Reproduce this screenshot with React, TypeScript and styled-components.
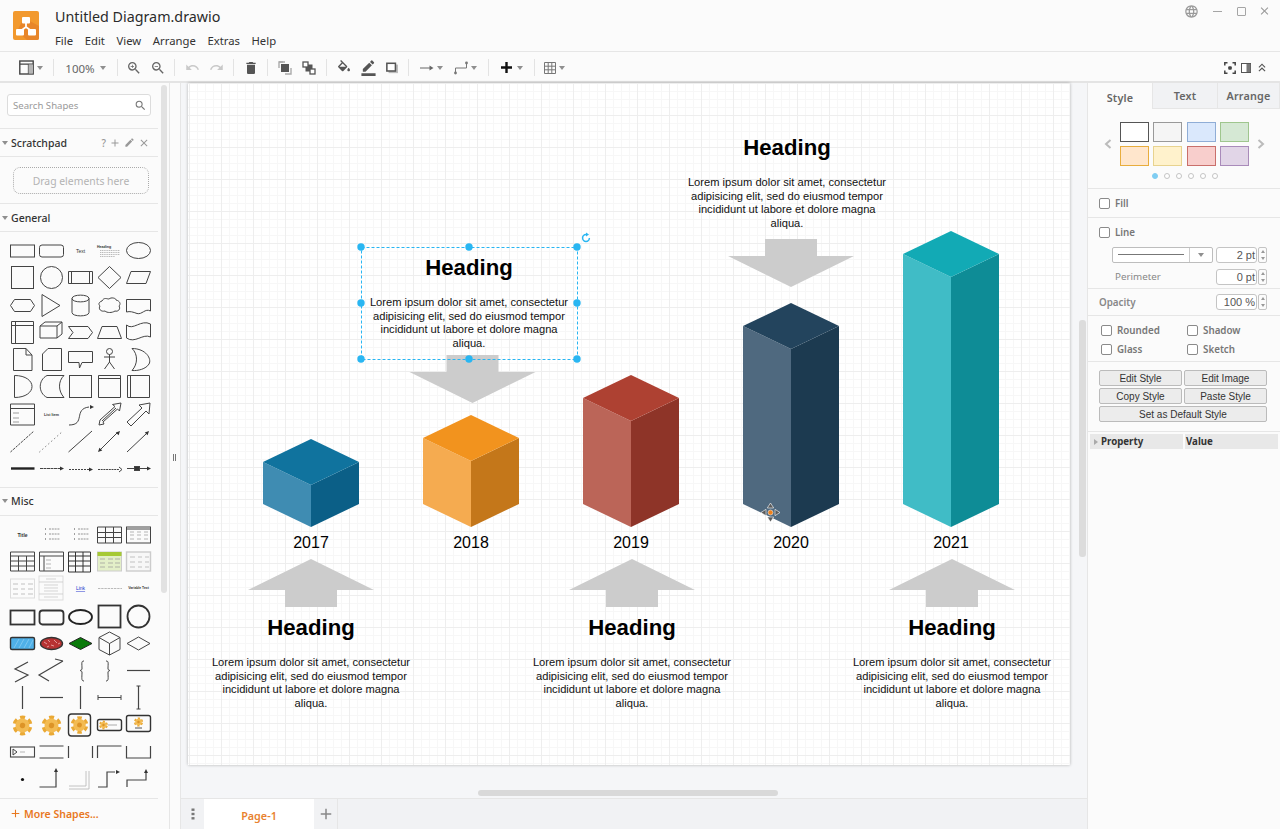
import React from "react";
import styled, { createGlobalStyle } from "styled-components";
import {
  MdAdd,
  MdBorderColor,
  MdClose,
  MdDelete,
  MdEdit,
  MdKeyboardDoubleArrowUp,
  MdLanguage,
  MdRedo,
  MdSearch,
  MdUndo,
  MdZoomIn,
  MdZoomOut,
} from "react-icons/md";

const UI_FONT = `"Noto Sans", "Open Sans", sans-serif`;
const DIAGRAM_FONT = `"Liberation Sans", Arial, sans-serif`;
const PANEL_BG = "#fbfbfb";
const BORDER = "#e6e6e6";

const GlobalStyle = createGlobalStyle`
  html, body { margin: 0; padding: 0; height: 100%; overflow: hidden; }
  body { font-family: ${UI_FONT}; background: ${PANEL_BG}; color: #333; }
  * { box-sizing: border-box; }
`;

const Root = styled.div`
  width: 1280px;
  height: 829px;
  display: flex;
  flex-direction: column;
  overflow: hidden;
`;

/* ---------- title bar ---------- */

const TitleBar = styled.header`
  height: 52px;
  flex: none;
  display: flex;
  padding: 11px 0 0 13px;
  background: ${PANEL_BG};
  border-bottom: 1px solid ${BORDER};
`;

const TitleGroup = styled.div`
  margin: -4px 0 0 16px;
  display: flex;
  flex-direction: column;
`;

const DocTitle = styled.div`
  font-size: 14.3px;
  line-height: 20px;
  color: #2b2b2b;
`;

const MenuBar = styled.nav`
  display: flex;
  gap: 11.6px;
  margin-top: 5px;
  font-size: 11.3px;
  line-height: 17px;
  color: #333;
`;

const WindowControls = styled.div`
  margin-left: auto;
  margin-top: -8px;
  padding-right: 7px;
  height: 16px;
  display: flex;
  align-items: center;
  gap: 9px;
  color: #9a9a9a;
  svg:first-child { margin-right: 2px; }
`;

const WinButton = styled.span`
  width: 15px;
  height: 15px;
  display: flex;
  align-items: center;
  justify-content: center;
`;

const MinGlyph = styled.span`
  width: 9px;
  height: 1px;
  background: #a5a5a5;
`;

const MaxGlyph = styled.span`
  width: 9px;
  height: 9px;
  border: 1px solid #a5a5a5;
  border-radius: 1px;
`;

/* ---------- toolbar ---------- */

const Toolbar = styled.div`
  height: 31px;
  flex: none;
  display: flex;
  align-items: center;
  padding: 2px 11px 0 14px;
  background: ${PANEL_BG};
  border-bottom: 2px solid #e4e4e4;
  color: #666;
`;

const ToolButton = styled.div<{ $w?: number; $faded?: boolean; $gap?: number }>`
  width: ${(p) => p.$w ?? 24}px;
  height: 24px;
  flex: none;
  display: flex;
  align-items: center;
  justify-content: center;
  gap: ${(p) => p.$gap ?? 3}px;
  font-size: 11.5px;
  color: ${(p) => (p.$faded ? "#c9c9c9" : "#666")};
`;

const ZoomLabel = styled.span`
  padding-top: 2px;
`;

const Sep = styled.span<{ $l?: number; $r?: number }>`
  width: 1px;
  height: 17px;
  flex: none;
  background: #e3e3e3;
  margin: 0 ${(p) => p.$r ?? 5}px 0 ${(p) => p.$l ?? 5}px;
`;

const Caret = styled.span`
  width: 0;
  height: 0;
  flex: none;
  border-left: 3.5px solid transparent;
  border-right: 3.5px solid transparent;
  border-top: 4px solid #8f8f8f;
`;

const ToolbarRight = styled.div`
  margin-left: auto;
  display: flex;
  align-items: center;
  gap: 2px;
`;

const SmallTool = styled.div`
  width: 14px;
  height: 16px;
  display: flex;
  align-items: center;
  justify-content: center;
  color: #555;
`;

/* ---------- main ---------- */

const Main = styled.div`
  flex: 1;
  min-height: 0;
  display: flex;
`;

const Sidebar = styled.aside`
  position: relative;
  width: 170px;
  flex: none;
  display: flex;
  flex-direction: column;
  background: ${PANEL_BG};
  border-right: 1px solid ${BORDER};
`;

const SidebarContent = styled.div`
  width: 158px;
  flex: 1;
  min-height: 0;
  display: flex;
  flex-direction: column;
`;

const SideScrollThumb = styled.div`
  position: absolute;
  left: 161px;
  top: 2px;
  width: 6px;
  height: 508px;
  border-radius: 3px;
  background: #e2e2e2;
`;

const SearchWrap = styled.div`
  height: 46px;
  flex: none;
  padding: 11px 7px 0;
  border-bottom: 1px solid ${BORDER};
`;

const SearchBox = styled.div`
  height: 22px;
  display: flex;
  align-items: center;
  justify-content: space-between;
  padding: 0 3px 0 5px;
  background: #fff;
  border: 1px solid #dcdcdc;
  border-radius: 3px;
  font-size: 9.6px;
  color: #9a9a9a;
  svg { color: #777; }
`;

const SectionHeader = styled.div`
  height: 28px;
  flex: none;
  display: flex;
  align-items: center;
  padding: 0 8px 0 2px;
  gap: 3px;
  font-size: 10.5px;
  font-weight: 500;
  color: #333;
  border-bottom: 1px solid ${BORDER};
`;

const HeaderTools = styled.div`
  margin-left: auto;
  display: flex;
  align-items: center;
  gap: 3px;
  color: #999;
  font-size: 10px;
`;

const ScratchBody = styled.div`
  height: 47px;
  flex: none;
  padding: 10px 9px 0 13px;
  border-bottom: 1px solid ${BORDER};
`;

const DropZone = styled.div`
  height: 27px;
  display: flex;
  align-items: center;
  justify-content: center;
  border: 1.5px dotted #aaa;
  border-radius: 7px;
  font-size: 10.4px;
  color: #b3b3b3;
`;

const ShapeGrid = styled.div`
  flex: none;
  display: grid;
  grid-template-columns: repeat(5, 29px);
  grid-auto-rows: 27.3px;
  padding: 5px 0 4px 8px;
  border-bottom: 1px solid ${BORDER};
`;

const ShapeSvg = styled.svg.attrs({ viewBox: "0 0 29 27" })`
  width: 29px;
  height: 27px;
  display: block;
  fill: none;
  stroke: #444;
  stroke-width: 1;
`;

const TinyText = styled.text<{ $bold?: boolean; $color?: string; $size?: number }>`
  font-family: ${DIAGRAM_FONT};
  font-size: ${(p) => p.$size ?? 5}px;
  font-weight: ${(p) => (p.$bold ? 700 : 400)};
  fill: ${(p) => p.$color ?? "#333"};
  stroke: none;
  text-anchor: middle;
`;

const MoreShapes = styled.div`
  height: 31px;
  width: 170px;
  flex: none;
  display: flex;
  align-items: center;
  gap: 2px;
  padding-left: 9px;
  font-size: 10.5px;
  font-weight: 600;
  color: #e8781f;
`;

const Splitter = styled.div`
  width: 11px;
  flex: none;
  display: flex;
  align-items: center;
  justify-content: center;
  background: #fbfbfb;
  border-right: 1px solid ${BORDER};
`;

const Grip = styled.span`
  width: 3px;
  height: 7px;
  margin-top: 3px;
  margin-right: 1px;
  border-left: 1px solid #777;
  border-right: 1px solid #777;
`;

/* ---------- canvas ---------- */

const CanvasColumn = styled.div`
  flex: 1;
  min-width: 0;
  display: flex;
  flex-direction: column;
  border-right: 1px solid ${BORDER};
`;

const CanvasArea = styled.div`
  position: relative;
  flex: 1;
  min-height: 0;
  padding: 0 0 0 7px;
  background: #f5f6f8;
`;

const Page = styled.div`
  position: relative;
  width: 882px;
  height: 682px;
  overflow: hidden;
  background-color: #fff;
  box-shadow: 0 0 3px rgba(0, 0, 0, 0.28);
  background-image:
    linear-gradient(#eeeeee 1px, transparent 1px),
    linear-gradient(90deg, #eeeeee 1px, transparent 1px),
    linear-gradient(#f7f7f7 1px, transparent 1px),
    linear-gradient(90deg, #f7f7f7 1px, transparent 1px);
  background-size: 32px 32px, 32px 32px, 8px 8px, 8px 8px;
  background-position: 1px 0;
`;

const DiagramSvg = styled.svg.attrs({ viewBox: "188 83 882 682" })`
  position: absolute;
  inset: 0;
  width: 882px;
  height: 682px;
`;

const Note = styled.div<{ $cx: number; $top: number }>`
  position: absolute;
  left: ${(p) => p.$cx - 188 - 110}px;
  top: ${(p) => p.$top - 83}px;
  width: 220px;
  text-align: center;
  font-family: ${DIAGRAM_FONT};
  color: #111;
`;

const NoteHeading = styled.div`
  font-size: 22.2px;
  font-weight: 700;
  line-height: 28px;
  color: #000;
`;

const NoteBody = styled.div`
  margin-top: 14.4px;
  font-size: 11.15px;
  line-height: 13.4px;
  white-space: pre-line;
`;

const YearLabel = styled.div<{ $cx: number }>`
  position: absolute;
  left: ${(p) => p.$cx - 188 - 30}px;
  top: ${534 - 83}px;
  width: 60px;
  text-align: center;
  font-family: ${DIAGRAM_FONT};
  font-size: 16px;
  line-height: 18px;
  color: #000;
`;

const VScroll = styled.div`
  position: absolute;
  left: 898px;
  top: 237px;
  width: 7px;
  height: 237px;
  border-radius: 3px;
  background: #dcdcdc;
`;

const HScroll = styled.div`
  position: absolute;
  left: 297px;
  top: 707px;
  width: 300px;
  height: 6px;
  border-radius: 3px;
  background: #d9d9d9;
`;

const PageBar = styled.div`
  height: 31px;
  flex: none;
  display: flex;
  align-items: stretch;
  background: #f1f2f4;
  border-top: 1px solid ${BORDER};
`;

const PageMenu = styled.div`
  width: 23px;
  display: flex;
  align-items: center;
  justify-content: center;
  color: #777;
`;

const PageTab = styled.div`
  width: 110px;
  display: flex;
  align-items: center;
  justify-content: center;
  padding-top: 2px;
  background: #fff;
  font-size: 10.8px;
  font-weight: 600;
  color: #e8822f;
`;

const AddPage = styled.div`
  width: 24px;
  display: flex;
  align-items: center;
  justify-content: center;
  color: #888;
  border-right: 1px solid ${BORDER};
`;

/* ---------- format panel ---------- */

const FormatPanel = styled.aside`
  width: 192px;
  flex: none;
  display: flex;
  flex-direction: column;
  background: ${PANEL_BG};
  font-size: 9.8px;
  color: #777;
`;

const Tabs = styled.div`
  height: 26px;
  flex: none;
  display: flex;
`;

const Tab = styled.div<{ $active?: boolean; $w: number }>`
  width: ${(p) => p.$w}px;
  display: flex;
  align-items: center;
  justify-content: center;
  font-size: 10.8px;
  font-weight: 600;
  letter-spacing: 0.2px;
  color: #666;
  padding-top: ${(p) => (p.$active ? 2 : 0)}px;
  background: ${(p) => (p.$active ? PANEL_BG : "#f1f2f4")};
  border-right: 1px solid ${BORDER};
  border-bottom: ${(p) => (p.$active ? "none" : `1px solid ${BORDER}`)};
`;

const Section = styled.div<{ $h: number }>`
  height: ${(p) => p.$h}px;
  flex: none;
  border-bottom: 1px solid ${BORDER};
`;

const SwatchRow = styled.div`
  display: flex;
  align-items: center;
  justify-content: center;
  gap: 8px;
  padding: 13px 0 0 1px;
  color: #bbb;
`;

const SwatchGrid = styled.div`
  display: grid;
  grid-template-columns: repeat(4, 29px);
  grid-auto-rows: 20px;
  column-gap: 4.6px;
  row-gap: 4px;
`;

const Swatch = styled.div<{ $fill: string; $line: string }>`
  background: ${(p) => p.$fill};
  border: 1px solid ${(p) => p.$line};
`;

const Dots = styled.div`
  display: flex;
  justify-content: center;
  gap: 6px;
  margin-top: 7px;
  padding-left: 1px;
`;

const Dot = styled.span<{ $on?: boolean }>`
  width: 6px;
  height: 6px;
  border-radius: 50%;
  background: ${(p) => (p.$on ? "#7fcdf2" : "#fff")};
  border: 1px solid ${(p) => (p.$on ? "#7fcdf2" : "#c4c4c4")};
`;

const CheckRow = styled.div<{ $left?: number; $h?: number }>`
  height: ${(p) => p.$h ?? 28}px;
  display: flex;
  align-items: center;
  gap: 5px;
  padding-left: ${(p) => p.$left ?? 11}px;
  font-weight: 600;
  color: #777;
`;

const Box = styled.span`
  width: 11px;
  height: 11px;
  flex: none;
  background: #fff;
  border: 1px solid #8a8a8a;
  border-radius: 2px;
`;

const FieldRow = styled.div<{ $h: number; $left: number; $mt?: number }>`
  height: ${(p) => p.$h}px;
  margin-top: ${(p) => p.$mt ?? 0}px;
  display: flex;
  align-items: center;
  padding-left: ${(p) => p.$left}px;
  color: #888;
`;

const OpacityLabel = styled.span`
  font-weight: 600;
  padding-top: 2px;
`;

const LineCombo = styled.div`
  width: 101px;
  height: 16px;
  flex: none;
  display: flex;
  align-items: center;
  background: #fff;
  border: 1px solid #bdbdbd;
  border-radius: 2px;
`;

const LineSample = styled.div`
  flex: 1;
  height: 100%;
  display: flex;
  align-items: center;
  padding: 0 5px;
  border-right: 1px solid #ccc;
  &::after { content: ""; display: block; width: 100%; height: 1px; background: #777; }
`;

const ComboCaret = styled.div`
  width: 22px;
  display: flex;
  justify-content: center;
`;

const SpinField = styled.div`
  margin-left: auto;
  margin-right: 13px;
  display: flex;
  align-items: center;
  gap: 1px;
`;

const SpinInput = styled.div`
  width: 41px;
  height: 16px;
  padding-right: 1px;
  text-align: right;
  font-family: ${DIAGRAM_FONT};
  font-size: 11px;
  line-height: 14px;
  color: #555;
  background: #fff;
  border: 1px solid #c4c4c4;
  border-radius: 3px;
`;

const Spinner = styled.div`
  width: 9px;
  height: 16px;
  display: flex;
  flex-direction: column;
  border: 1px solid #c4c4c4;
  border-radius: 2px;
`;

const SpinPart = styled.span<{ $down?: boolean }>`
  flex: 1;
  display: flex;
  align-items: center;
  justify-content: center;
  &::after {
    content: "";
    border-left: 2.5px solid transparent;
    border-right: 2.5px solid transparent;
    ${(p) => (p.$down ? "border-top" : "border-bottom")}: 3px solid #999;
  }
`;

const OptionGrid = styled.div`
  display: grid;
  grid-template-columns: 86px 86px;
  grid-auto-rows: 19.5px;
  padding: 4.5px 0 0 13px;
`;

const StyleButtons = styled.div`
  display: grid;
  grid-template-columns: 83px 83px;
  column-gap: 2px;
  grid-auto-rows: 16px;
  row-gap: 2px;
  padding: 8px 0 0 11px;
`;

const StyleButton = styled.div<{ $wide?: boolean }>`
  ${(p) => p.$wide && "grid-column: span 2;"}
  display: flex;
  align-items: center;
  justify-content: center;
  background: #ececec;
  border: 1px solid #bbb;
  border-radius: 2px;
  font-family: ${DIAGRAM_FONT};
  font-size: 10px;
  color: #333;
`;

const PropertyHead = styled.div`
  display: grid;
  grid-template-columns: 93px 93px;
  column-gap: 2px;
  height: 15px;
  margin: 2px 0 0 2px;
`;

const PropertyCell = styled.div`
  display: flex;
  align-items: center;
  gap: 3px;
  padding-left: 1px;
  background: #e8e8e8;
  font-size: 9.7px;
  font-weight: 700;
  color: #333;
`;

const ExpandMark = styled.span`
  margin-left: 3px;
  border-top: 3px solid transparent;
  border-bottom: 3px solid transparent;
  border-left: 4px solid #aaa;
`;

/* ---------- data ---------- */

const LOREM = "Lorem ipsum dolor sit amet, consectetur\nadipisicing elit, sed do eiusmod tempor\nincididunt ut labore et dolore magna\naliqua.";

const bars = [
  { year: "2017", cx: 311, top: 439, topFill: "#10739e", left: "#3f8cb2", right: "#0b5f87" },
  { year: "2018", cx: 471, top: 415, topFill: "#f2931e", left: "#f5ab50", right: "#c4771a" },
  { year: "2019", cx: 631, top: 375, topFill: "#ae4132", left: "#bb6558", right: "#8e3428" },
  { year: "2020", cx: 791, top: 303, topFill: "#23445d", left: "#4f697f", right: "#1c3a50" },
  { year: "2021", cx: 951, top: 231, topFill: "#12aab5", left: "#40bcc6", right: "#0e8c96" },
];

const notes = [
  { cx: 311, top: 614 },
  { cx: 469, top: 254 },
  { cx: 632, top: 614 },
  { cx: 787, top: 134 },
  { cx: 952, top: 614 },
];

const swatches = [
  ["#ffffff", "#555555"],
  ["#f5f5f5", "#999999"],
  ["#dae8fc", "#8fadd6"],
  ["#d5e8d4", "#9fc68e"],
  ["#ffe6cc", "#e8ad3d"],
  ["#fff2cc", "#e8d38f"],
  ["#f8cecc", "#c96f6b"],
  ["#e1d5e7", "#a98bba"],
];

const handles: [number, number][] = [
  [361, 247], [469, 247], [577, 247],
  [361, 303], [577, 303],
  [361, 359], [469, 359], [577, 359],
];

/* ---------- small drawings ---------- */

const Logo = () => (
  <svg width="26" height="29" viewBox="0 0 26 29">
    <rect width="26" height="29" rx="2" fill="#f2992e" />
    <path d="M26 15 V27 a2 2 0 0 1 -2 2 H14 L4 20 L11 7 Z" fill="#e8862a" />
    <path d="M13 11 V16 M13 16 L7.5 20 M13 16 L18.5 20" stroke="#fff" strokeWidth="1.8" fill="none" />
    <rect x="9" y="6" width="8" height="6.5" rx="1" fill="#fff" />
    <rect x="3" y="18" width="8" height="6.5" rx="1" fill="#fff" />
    <rect x="15" y="18" width="8" height="6.5" rx="1" fill="#fff" />
  </svg>
);

const PanelIcon = () => (
  <svg width="15" height="15" viewBox="0 0 15 15" fill="none">
    <rect x="0.8" y="1" width="13.4" height="13" stroke="#444" strokeWidth="1.4" />
    <path d="M1 4.2H14M9.5 4.2V14" stroke="#444" strokeWidth="1.3" />
    <rect x="9.5" y="4.5" width="4.5" height="9" fill="#b5b5b5" />
  </svg>
);

const ToFrontIcon = () => (
  <svg width="14" height="14" viewBox="0 0 14 14" fill="none">
    <path d="M5 1H1V7" stroke="#aaa" strokeWidth="1.4" />
    <path d="M1 1H7M13 7V13H7" stroke="#aaa" strokeWidth="1.4" />
    <rect x="3" y="3" width="8" height="8" fill="#555" />
  </svg>
);

const ToBackIcon = () => (
  <svg width="14" height="14" viewBox="0 0 14 14">
    <rect x="3.5" y="3.5" width="7" height="7" fill="#555" />
    <rect x="1" y="1" width="5" height="5" fill="#fff" stroke="#555" strokeWidth="1.3" />
    <rect x="8" y="8" width="5" height="5" fill="#fff" stroke="#555" strokeWidth="1.3" />
  </svg>
);

const BucketIcon = () => (
  <svg width="16" height="16" viewBox="0 0 24 24" fill="#555">
    <path d="M16.56 8.94L7.62 0 6.21 1.41l2.38 2.38-5.15 5.15c-.59.59-.59 1.54 0 2.12l5.5 5.5c.29.29.68.44 1.06.44s.77-.15 1.06-.44l5.5-5.5c.59-.58.59-1.53 0-2.11zM5.21 10L10 5.21 14.79 10H5.21zM19 11.5s-2 2.17-2 3.5c0 1.1.9 2 2 2s2-.9 2-2c0-1.33-2-3.5-2-3.5z" />
  </svg>
);

const ShadowIcon = () => (
  <svg width="12" height="12" viewBox="0 0 14 14">
    <rect x="3" y="3" width="11" height="10" fill="#bdbdbd" />
    <rect x="1" y="1.5" width="10" height="9" fill="#fff" stroke="#555" strokeWidth="1.8" />
  </svg>
);

const ConnIcon = () => (
  <svg width="14" height="10" viewBox="0 0 14 10">
    <path d="M0 5H10" stroke="#666" strokeWidth="1" />
    <path d="M9.5 2.5L13.5 5L9.5 7.5Z" fill="#666" />
  </svg>
);

const WaypointIcon = () => (
  <svg width="14" height="14" viewBox="0 0 14 14" fill="none">
    <path d="M1.5 12.5V7H12.5V1.5" stroke="#777" strokeWidth="1" />
    <circle cx="1.5" cy="12" r="1.4" fill="#777" />
    <circle cx="12.5" cy="2" r="1.4" fill="#777" />
  </svg>
);

const PlusIcon = () => (
  <svg width="11" height="11" viewBox="0 0 11 11">
    <path d="M5.5 0V11M0 5.5H11" stroke="#111" strokeWidth="2.4" />
  </svg>
);

const TableIcon = () => (
  <svg width="12" height="12" viewBox="0 0 12 12" fill="none" stroke="#777" strokeWidth="1">
    <path d="M.5.5h11v11H.5zM.5 4.2h11M.5 7.8h11M4.2.5v11M7.8.5v11" />
  </svg>
);

const FitIcon = () => (
  <svg width="12" height="12" viewBox="0 0 12 12" fill="none" stroke="#444" strokeWidth="1.5">
    <path d="M.8 3.5V.8H3.5M8.5.8h2.7v2.7M11.2 8.5v2.7H8.5M3.5 11.2H.8V8.5" />
    <rect x="4.2" y="4.2" width="3.6" height="3.6" fill="#444" stroke="none" rx="1" />
  </svg>
);

const SplitIcon = () => (
  <svg width="10" height="10" viewBox="0 0 10 10">
    <rect x=".5" y=".5" width="9" height="9" fill="#fff" stroke="#555" />
    <rect x="5.5" y="1" width="4" height="8" fill="#777" />
  </svg>
);

const Gear = ({ x = 14.5, y = 13.5, s = 1 }: { x?: number; y?: number; s?: number }) => (
  <g transform={`translate(${x} ${y}) scale(${s}) rotate(12)`} stroke="none">
    <circle r="9" fill="none" stroke="#eaa935" strokeWidth="4" strokeDasharray="5.4 4.02" />
    <circle r="7.8" fill="#f3bb52" />
    <circle r="3" fill="#dd9427" />
  </g>
);

const ArrowHead = ({ x, y, a }: { x: number; y: number; a: number }) => (
  <path d="M0 0L-4 -2L-4 2Z" transform={`translate(${x} ${y}) rotate(${a})`} fill="#333" stroke="none" />
);

const generalShapes: React.ReactNode[] = [
  <rect x="2.5" y="8" width="24" height="12" />,
  <rect x="2.5" y="8" width="24" height="12" rx="2.5" />,
  <TinyText x="14.5" y="15.5">Text</TinyText>,
  <g>
    <TinyText x="9" y="10.5" $bold $size={3.6}>Heading</TinyText>
    <path d="M5 13.5H25M5 15.5H25M5 17.5H25M5 19.5H20" stroke="#aaa" strokeWidth=".8" strokeDasharray="1.2 .6" />
  </g>,
  <ellipse cx="14.5" cy="13.5" rx="12" ry="8" />,

  <rect x="3.5" y="2.5" width="22" height="22" />,
  <circle cx="14.5" cy="13.5" r="11" />,
  <path d="M2.5 7.5h24v12h-24zM5.5 7.5v12M23.5 7.5v12" />,
  <path d="M14.5 2.5L26 13.5L14.5 24.5L3 13.5Z" />,
  <path d="M7 7.5H26.5L22 19.5H2.5Z" />,

  <path d="M6.5 7.5H22.5L26.5 13.5L22.5 19.5H6.5L2.5 13.5Z" />,
  <path d="M5 2.5L23 13.5L5 24.5Z" />,
  <path d="M6 6.5C6 2 23 2 23 6.5V20.5C23 25 6 25 6 20.5ZM6 6.5C6 11 23 11 23 6.5" />,
  <path d="M7 9C9 5 12 7 14 7C16 5 21 6 21 8C25 9 26 12 24 14C26 17 23 20 20 19C17 21 12 21 10 19C6 20 3 17 5 14C3 12 4 10 7 9Z" />,
  <path d="M2.5 7.5H26.5V19C21 16 18 23 13 21.5C9 20 6 19 2.5 20Z" />,

  <path d="M3.5 2.5h22v22h-22zM3.5 6.5h22M7.5 2.5v22" />,
  <path d="M3 7L8 3H25V15L20 19H3ZM3 7H20V19M20 7L25 3" />,
  <path d="M2.5 7.5H22L26.5 13.5L22 19.5H2.5L7 13.5Z" />,
  <path d="M7 7.5H22L26.5 19.5H2.5Z" />,
  <path d="M2.5 6C9 12 17 0 26.5 5V18C19 14 11 25 2.5 19Z" />,

  <path d="M5.5 2.5H18L24 9V24.5H5.5ZM18 2.5V9H24" />,
  <path d="M11 2.5H24.5V24.5H5.5V8Z" />,
  <path d="M2.5 5.5H26.5V16.5H16L13.5 22L13 16.5H2.5Z" />,
  <g>
    <circle cx="14.5" cy="5.5" r="3" />
    <path d="M14.5 8.5V16M9 11H20M14.5 16L9.5 23M14.5 16L19.5 23" />
  </g>,
  <path d="M8 2.5C22 2.5 28 13 25 18C22 23 14 25 8 24.5C14 18 14 8 8 2.5Z" />,

  <path d="M6.5 2.5C18 2.5 24 8 24 13.5C24 19 18 24.5 6.5 24.5Z" />,
  <path d="M10 2.5H27C21 8 21 18 27 24.5H10C1 20 1 7 10 2.5Z" />,
  <rect x="3.5" y="2.5" width="22" height="22" />,
  <path d="M3.5 2.5h22v22h-22zM3.5 5.5h22" />,
  <path d="M3.5 2.5h22v22h-22zM6.5 2.5v22" />,

  <g>
    <path d="M2.5 3h24v21h-24zM2.5 7.5h24" />
    <path d="M5 12H11M5 17H11M5 21H11" stroke="#777" strokeWidth=".7" />
  </g>,
  <TinyText x="14.5" y="15" $bold $size={3.6}>List Item</TinyText>,
  <g>
    <path d="M3 24C20 24 7 8 23 6" />
    <ArrowHead x={28} y={6} a={0} />
  </g>,
  <path d="M4 24L5 19L20 5.5L17.5 3.5L26 2L24.5 10L22.5 8L8 21L9 23ZM7 20L21 7" strokeWidth="1" />,
  <path d="M3 21L18 7L15 4L26 2L25 13L22 10L7 25Z" />,

  <path d="M2.5 24L26 3" strokeDasharray="2.5 1" />,
  <path d="M2.5 24L26 3" strokeDasharray="1 3" />,
  <path d="M2.5 24L26 3" />,
  <g>
    <path d="M5 22L22 5" />
    <ArrowHead x={25} y={3} a={-45} />
    <ArrowHead x={3} y={24} a={135} />
  </g>,
  <g>
    <path d="M3 24L22 6" />
    <ArrowHead x={25} y={3} a={-45} />
  </g>,

  <path d="M3 13.5H26.5" strokeWidth="2.4" stroke="#222" />,
  <g>
    <path d="M3 13.5H23" strokeDasharray="3 .5" />
    <ArrowHead x={27} y={13.5} a={0} />
  </g>,
  <g>
    <path d="M3 14.5H23" strokeDasharray="2 1" />
    <ArrowHead x={27} y={14.5} a={0} />
  </g>,
  <g>
    <path d="M3 14.5H24" strokeDasharray="2 .7" />
    <path d="M24 12L27 14.5L24 17" />
  </g>,
  <g>
    <path d="M3 13.5H23" />
    <rect x="10.5" y="11.5" width="5" height="4" fill="#333" />
    <ArrowHead x={27} y={13.5} a={0} />
  </g>,
];

const miscShapes: React.ReactNode[] = [
  <TinyText x="14.5" y="15.5" $bold>Title</TinyText>,
  <g>
    <path d="M8 8H9.5M8 13H9.5M8 18H9.5" strokeDasharray="1 1" />
    <path d="M12 8H23M12 13H23M12 18H23" stroke="#888" strokeDasharray="2 .8" strokeWidth=".9" />
  </g>,
  <g>
    <path d="M8 8H9.5M8 13H9.5M8 18H9.5" strokeDasharray="1 1" />
    <path d="M12 8H23M12 13H23M12 18H23" stroke="#888" strokeDasharray="2 .8" strokeWidth=".9" />
  </g>,
  <path d="M2.5 6h24v16h-24zM2.5 11.5h24M2.5 16.5h24M10.5 6v16M18.5 6v16" />,
  <g>
    <rect x="2.5" y="6" width="24" height="16" />
    <path d="M2.5 8H26.5" strokeWidth="1" />
    <path d="M6 11H10M13 11H17M20 11H24M6 14H10M13 14H17M20 14H24M6 18H10M13 18H17M20 18H24" stroke="#999" strokeWidth=".7" />
  </g>,

  <path d="M2.5 4h24v19h-24zM2.5 8h24M2.5 13h24M2.5 18h24M10.5 8v15M18.5 8v15" />,
  <g>
    <path d="M2.5 4h24v19h-24zM2.5 8h24M7 8v15" />
    <path d="M9 12H14M9 16H14M9 20H14" stroke="#999" strokeWidth=".7" />
  </g>,
  <path d="M2.5 4h22v20h-22zM2.5 8h22M2.5 13h22M2.5 18h22M9.5 4v20M17 4v20" stroke="#333" />,
  <g>
    <rect x="2.5" y="4" width="24" height="19" fill="#e3efc8" stroke="#ccc" />
    <rect x="2.5" y="4" width="24" height="4" fill="#a6c935" stroke="none" />
    <path d="M5 11H10M13 11H18M20 11H25M5 15H10M13 15H18M20 15H25M5 19H10M13 19H18M20 19H25" stroke="#999" strokeWidth=".7" />
  </g>,
  <g>
    <rect x="2.5" y="4" width="24" height="19" fill="#f7f7f7" stroke="#ccc" strokeWidth="1.4" />
    <path d="M6 9H11M14 9H18M21 9H25M6 14H11M14 14H18M21 14H25M6 19H11M14 19H18M21 19H25" stroke="#aaa" strokeWidth=".7" />
  </g>,

  <g>
    <rect x="2.5" y="4" width="24" height="19" stroke="#ddd" />
    <path d="M5 9H10M13 9H17M20 9H25M5 14H10M13 14H17M20 14H25M5 19H10M13 19H17M20 19H25" stroke="#aaa" strokeWidth=".7" />
  </g>,
  <g>
    <rect x="2" y="1" width="24" height="24" stroke="#ddd" />
    <path d="M2 7H26M2 19H26M9 4H19M7 10H21M7 13H21M7 16H21M7 22H21" stroke="#c4c4c4" strokeWidth=".7" />
  </g>,
  <TinyText x="14.5" y="15" $color="#2233cc" style={{ textDecoration: "underline" }}>Link</TinyText>,
  <path d="M3 13.5H27" stroke="#aaa" strokeWidth=".8" strokeDasharray="2.4 .8" />,
  <TinyText x="14.5" y="13.5" $bold $size={3.4}>Variable Text</TinyText>,

  <rect x="2.5" y="7.5" width="24" height="14" strokeWidth="1.8" stroke="#333" />,
  <rect x="2.5" y="7.5" width="24" height="14" rx="3" strokeWidth="1.8" stroke="#333" />,
  <ellipse cx="14.5" cy="14" rx="11.5" ry="7" strokeWidth="1.8" stroke="#222" />,
  <rect x="3.5" y="2.5" width="22" height="22" strokeWidth="1.8" stroke="#333" />,
  <circle cx="14.5" cy="13.5" r="11" strokeWidth="1.8" stroke="#333" />,

  <g>
    <rect x="2.5" y="7.5" width="24" height="12" rx="1.5" fill="#4fb0e8" stroke="#333" strokeWidth="1.4" />
    <path d="M6 18L11 9M11 18L16 9M16 18L21 9M21 18L25 10" stroke="#8fd0f2" strokeWidth=".7" />
  </g>,
  <g>
    <ellipse cx="14.5" cy="13.5" rx="11" ry="6" fill="#b73232" stroke="#333" strokeWidth="1.4" />
    <path d="M7 12L10 14M11 10L13 12M14 15L17 16M17 10L20 13M21 14L23 13M10 17L12 16" stroke="#efb3b3" strokeWidth=".8" />
  </g>,
  <path d="M14.5 7.5L26 13.5L14.5 19.5L3 13.5Z" fill="#0a7a0a" stroke="#222" />,
  <path d="M14.5 2L25 7.5V19.5L14.5 25L4 19.5V7.5ZM4 7.5L14.5 13.5L25 7.5M14.5 13.5V25" />,
  <path d="M14.5 7L26 13.5L14.5 20L3 13.5Z" />,

  <path d="M20 5L7 12L20 18L7 25" strokeWidth="1.2" />,
  <path d="M26 4L2 18L12 24M18 2L26 4" strokeWidth="1.2" />,
  <path d="M18 4C15 4 16 6 16 12C16 13 14 13.5 14 13.5C14 13.5 16 14 16 15C16 21 15 24 18 24" />,
  <path d="M11 4C14 4 13 6 13 12C13 13 15 13.5 15 13.5C15 13.5 13 14 13 15C13 21 14 24 11 24" />,
  <path d="M3 13.5H26" strokeWidth="1.2" />,

  <path d="M14.5 2V25" strokeWidth="1.2" />,
  <path d="M3 13.5H26" strokeWidth="1.2" />,
  <path d="M14.5 2V25" strokeWidth="1.2" />,
  <path d="M3 13.5H26M3 11V16M26 11V16" strokeWidth="1" />,
  <path d="M14.5 2V25M12.5 2H16.5M12.5 25H16.5" strokeWidth="1.2" />,

  <Gear s={0.9} />,
  <Gear s={0.9} />,
  <g>
    <rect x="2.5" y="2" width="22" height="22" rx="3" strokeWidth="1.4" stroke="#333" />
    <Gear x={13.5} y={13} s={0.8} />
  </g>,
  <g>
    <rect x="2.5" y="7.5" width="24" height="11" rx="2" strokeWidth="1.4" stroke="#333" />
    <Gear x={8.5} y={13} s={0.4} />
    <path d="M13 13H22" stroke="#777" strokeWidth=".6" />
  </g>,
  <g>
    <rect x="2.5" y="3.5" width="24" height="16" rx="2" strokeWidth="1.4" stroke="#333" />
    <Gear x={14.5} y={10} s={0.42} />
    <path d="M11 16H18" stroke="#555" />
  </g>,

  <g>
    <rect x="2.5" y="8" width="24" height="10" strokeWidth="1.1" />
    <path d="M5 10L9 13L5 16Z" />
    <path d="M12 13H17" stroke="#999" strokeWidth=".7" />
  </g>,
  <path d="M2.5 7H26.5M2.5 19H26.5" strokeWidth="1.2" />,
  <path d="M2.5 7V19M26.5 7V19" strokeWidth="1.2" />,
  <path d="M2.5 19V7H26.5" strokeWidth="1.2" />,
  <path d="M2.5 7V19H26.5V7" strokeWidth="1.2" />,

  <circle cx="14.5" cy="13.5" r="1.6" fill="#111" stroke="none" />,
  <g>
    <path d="M2.5 21H19V5" strokeWidth="1.2" />
    <ArrowHead x={19} y={2} a={-90} />
  </g>,
  <path d="M3 20H20V5M3 23H23V5" stroke="#bbb" strokeWidth=".9" />,
  <g>
    <path d="M3 21H12V6H20" strokeWidth="1.2" />
    <ArrowHead x={25} y={6} a={0} />
  </g>,
  <g>
    <path d="M3 21V14H22V7" strokeWidth="1.2" />
    <ArrowHead x={22} y={3} a={-90} />
  </g>,
];

const Cube = ({ cx, top, topFill, left, right }: (typeof bars)[number]) => {
  const bottom = 527;
  const edge = bottom - 23;
  const mid = top + 23;
  const front = top + 46;
  return (
    <g>
      <path d={`M${cx - 48} ${mid}L${cx} ${front}V${bottom}L${cx - 48} ${edge}Z`} fill={left} />
      <path d={`M${cx + 48} ${mid}L${cx} ${front}V${bottom}L${cx + 48} ${edge}Z`} fill={right} />
      <path d={`M${cx} ${top}L${cx + 48} ${mid}L${cx} ${front}L${cx - 48} ${mid}Z`} fill={topFill} />
    </g>
  );
};

const BigArrow = ({ cx, y, up }: { cx: number; y: number; up?: boolean }) => {
  const d = up ? -1 : 1;
  const neck = y + d * 17;
  const tip = y + d * 48;
  return (
    <path
      d={`M${cx - 26} ${y}H${cx + 26}V${neck}H${cx + 63}L${cx} ${tip}L${cx - 63} ${neck}H${cx - 26}Z`}
      fill="#cccccc"
    />
  );
};

const Spin = ({ value }: { value: string }) => (
  <SpinField>
    <SpinInput>{value}</SpinInput>
    <Spinner>
      <SpinPart />
      <SpinPart $down />
    </Spinner>
  </SpinField>
);

const App: React.FC = () => (
  <Root>
    <GlobalStyle />
    <TitleBar>
      <Logo />
      <TitleGroup>
        <DocTitle>Untitled Diagram.drawio</DocTitle>
        <MenuBar>
          {["File", "Edit", "View", "Arrange", "Extras", "Help"].map((m) => (
            <span key={m}>{m}</span>
          ))}
        </MenuBar>
      </TitleGroup>
      <WindowControls>
        <MdLanguage size={15} />
        <WinButton><MinGlyph /></WinButton>
        <WinButton><MaxGlyph /></WinButton>
        <WinButton><MdClose size={14} /></WinButton>
      </WindowControls>
    </TitleBar>

    <Toolbar>
      <ToolButton $w={34}><PanelIcon /><Caret /></ToolButton>
      <Sep />
      <ToolButton $w={53} $gap={5}><ZoomLabel>100%</ZoomLabel><Caret /></ToolButton>
      <Sep $r={4} />
      <ToolButton><MdZoomIn size={16} /></ToolButton>
      <ToolButton><MdZoomOut size={16} /></ToolButton>
      <Sep $l={4} />
      <ToolButton $faded><MdUndo size={15} /></ToolButton>
      <ToolButton $faded><MdRedo size={15} /></ToolButton>
      <Sep $l={5} />
      <ToolButton><MdDelete size={16} color="#555" /></ToolButton>
      <Sep $l={4} />
      <ToolButton><ToFrontIcon /></ToolButton>
      <ToolButton><ToBackIcon /></ToolButton>
      <Sep $l={5} $r={5} />
      <ToolButton><BucketIcon /></ToolButton>
      <ToolButton><MdBorderColor size={17} color="#555" /></ToolButton>
      <ToolButton><ShadowIcon /></ToolButton>
      <Sep $l={4} />
      <ToolButton $w={34}><ConnIcon /><Caret /></ToolButton>
      <ToolButton $w={34}><WaypointIcon /><Caret /></ToolButton>
      <Sep $l={6} $r={6} />
      <ToolButton $w={34} $gap={5}><PlusIcon /><Caret /></ToolButton>
      <Sep $l={5} $r={1} />
      <ToolButton $w={36}><TableIcon /><Caret /></ToolButton>
      <ToolbarRight>
        <SmallTool><FitIcon /></SmallTool>
        <SmallTool><SplitIcon /></SmallTool>
        <SmallTool><MdKeyboardDoubleArrowUp size={15} /></SmallTool>
      </ToolbarRight>
    </Toolbar>

    <Main>
      <Sidebar>
        <SidebarContent>
          <SearchWrap>
            <SearchBox>
              Search Shapes
              <MdSearch size={13} />
            </SearchBox>
          </SearchWrap>
          <SectionHeader>
            <Caret />
            Scratchpad
            <HeaderTools>
              ?
              <MdAdd size={12} />
              <MdEdit size={11} />
              <MdClose size={12} />
            </HeaderTools>
          </SectionHeader>
          <ScratchBody>
            <DropZone>Drag elements here</DropZone>
          </ScratchBody>
          <SectionHeader><Caret />General</SectionHeader>
          <ShapeGrid>
            {generalShapes.map((shape, i) => (
              <ShapeSvg key={i}>{shape}</ShapeSvg>
            ))}
          </ShapeGrid>
          <SectionHeader><Caret />Misc</SectionHeader>
          <ShapeGrid>
            {miscShapes.map((shape, i) => (
              <ShapeSvg key={i}>{shape}</ShapeSvg>
            ))}
          </ShapeGrid>
        </SidebarContent>
        <SideScrollThumb />
        <MoreShapes><MdAdd size={13} />More Shapes...</MoreShapes>
      </Sidebar>
      <Splitter><Grip /></Splitter>

      <CanvasColumn>
        <CanvasArea>
          <Page>
            <DiagramSvg>
              {bars.map((b) => (
                <Cube key={b.year} {...b} />
              ))}
              <BigArrow cx={472.5} y={355} />
              <BigArrow cx={791} y={239} />
              <BigArrow cx={311} y={607} up />
              <BigArrow cx={632} y={607} up />
              <BigArrow cx={952} y={607} up />

              <rect x="361.5" y="247.5" width="216" height="112" fill="none" stroke="#29b6f2" strokeDasharray="3 2" />
              {handles.map(([x, y]) => (
                <circle key={`${x}-${y}`} cx={x} cy={y} r="3.7" fill="#29b6f2" />
              ))}
              <circle cx="586" cy="238" r="3.4" fill="none" stroke="#29b6f2" strokeWidth="1.5" strokeDasharray="16 6" />
              <path d="M586 232.5l3 2-3 2z" fill="#29b6f2" />

              <path
                d="M770.5 503l3.2 5h-6.4zM770.5 522l3.2-5h-6.4zM761 512.5l5-3.2v6.4zM780 512.5l-5-3.2v6.4z"
                fill="#5b5b5b"
                stroke="#fff"
                strokeWidth=".6"
              />
              <circle cx="770.5" cy="512.5" r="2.5" fill="#f0811a" stroke="#fff" strokeWidth=".5" />
            </DiagramSvg>
            {notes.map((n) => (
              <Note key={`${n.cx}`} $cx={n.cx} $top={n.top}>
                <NoteHeading>Heading</NoteHeading>
                <NoteBody>{LOREM}</NoteBody>
              </Note>
            ))}
            {bars.map((b) => (
              <YearLabel key={b.year} $cx={b.cx}>{b.year}</YearLabel>
            ))}
          </Page>
          <VScroll />
          <HScroll />
        </CanvasArea>
        <PageBar>
          <PageMenu>
            <svg width="4" height="12" viewBox="0 0 4 12" fill="#777">
              <rect x="0.5" y="0.5" width="3" height="2.4" />
              <rect x="0.5" y="4.8" width="3" height="2.4" />
              <rect x="0.5" y="9.1" width="3" height="2.4" />
            </svg>
          </PageMenu>
          <PageTab>Page-1</PageTab>
          <AddPage><MdAdd size={18} /></AddPage>
        </PageBar>
      </CanvasColumn>

      <FormatPanel>
        <Tabs>
          <Tab $active $w={65}>Style</Tab>
          <Tab $w={65}>Text</Tab>
          <Tab $w={62}>Arrange</Tab>
        </Tabs>
        <Section $h={80}>
          <SwatchRow>
            <svg width="8" height="10" viewBox="0 0 8 10" fill="none" stroke="#bbb" strokeWidth="2"><path d="M6.5 1L2 5l4.5 4" /></svg>
            <SwatchGrid>
              {swatches.map(([fill, line]) => (
                <Swatch key={fill} $fill={fill} $line={line} />
              ))}
            </SwatchGrid>
            <svg width="8" height="10" viewBox="0 0 8 10" fill="none" stroke="#bbb" strokeWidth="2"><path d="M1.5 1L6 5 1.5 9" /></svg>
          </SwatchRow>
          <Dots>
            <Dot $on /><Dot /><Dot /><Dot /><Dot /><Dot />
          </Dots>
        </Section>
        <Section $h={29}>
          <CheckRow><Box />Fill</CheckRow>
        </Section>
        <Section $h={71}>
          <CheckRow><Box />Line</CheckRow>
          <FieldRow $h={17} $left={24}>
            <LineCombo>
              <LineSample />
              <ComboCaret><Caret /></ComboCaret>
            </LineCombo>
            <Spin value="2 pt" />
          </FieldRow>
          <FieldRow $h={21} $left={27} $mt={3}>
            Perimeter
            <Spin value="0 pt" />
          </FieldRow>
        </Section>
        <Section $h={27}>
          <FieldRow $h={25} $left={11}>
            <OpacityLabel>Opacity</OpacityLabel>
            <Spin value="100 %" />
          </FieldRow>
        </Section>
        <Section $h={46}>
          <OptionGrid>
            <CheckRow $left={0} $h={19}><Box />Rounded</CheckRow>
            <CheckRow $left={0} $h={19}><Box />Shadow</CheckRow>
            <CheckRow $left={0} $h={19}><Box />Glass</CheckRow>
            <CheckRow $left={0} $h={19}><Box />Sketch</CheckRow>
          </OptionGrid>
        </Section>
        <Section $h={70}>
          <StyleButtons>
            <StyleButton>Edit Style</StyleButton>
            <StyleButton>Edit Image</StyleButton>
            <StyleButton>Copy Style</StyleButton>
            <StyleButton>Paste Style</StyleButton>
            <StyleButton $wide>Set as Default Style</StyleButton>
          </StyleButtons>
        </Section>
        <PropertyHead>
          <PropertyCell><ExpandMark />Property</PropertyCell>
          <PropertyCell>Value</PropertyCell>
        </PropertyHead>
      </FormatPanel>
    </Main>
  </Root>
);

export default App;
